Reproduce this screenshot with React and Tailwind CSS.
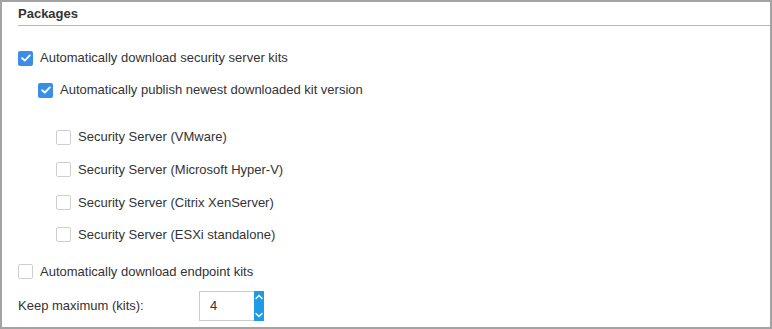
import { useState } from 'react';

function Check({ checked, onChange, label }) {
  return (
    <label className="flex items-center h-5 cursor-pointer select-none">
      <span
        onClick={() => onChange(!checked)}
        className={`w-[15px] h-[15px] rounded-[2px] flex items-center justify-center shrink-0 ${
          checked ? 'bg-[#3a8ee6]' : 'bg-white border border-[#cfcfcf]'
        }`}
      >
        {checked && (
          <svg width="10" height="8" viewBox="0 0 10 8" fill="none">
            <path d="M1.2 4.2 L3.8 6.6 L8.8 1.4" stroke="white" strokeWidth="1.9" strokeLinecap="round" strokeLinejoin="round" />
          </svg>
        )}
      </span>
      <span className="ml-[7px] text-[13px] text-[#333]">{label}</span>
    </label>
  );
}

const servers = [
  'Security Server (VMware)',
  'Security Server (Microsoft Hyper-V)',
  'Security Server (Citrix XenServer)',
  'Security Server (ESXi standalone)',
];

export default function App() {
  const [dlServer, setDlServer] = useState(true);
  const [publish, setPublish] = useState(true);
  const [srv, setSrv] = useState([false, false, false, false]);
  const [dlEndpoint, setDlEndpoint] = useState(false);
  const [keep, setKeep] = useState(4);

  return (
    <div
      className="w-[772px] h-[329px] bg-white border-2 border-[#a3a3a3] overflow-hidden"
      style={{ fontFamily: '"Liberation Sans", Arial, sans-serif' }}
    >
      <div className="ml-4 h-[24px] border-b border-[#b8b8b8] flex items-center">
        <span className="text-[13px] font-bold text-[#333]">Packages</span>
      </div>

      <div className="pl-4 pt-[22px] flex flex-col">
        <Check checked={dlServer} onChange={setDlServer} label="Automatically download security server kits" />
        <div className="pl-5 mt-3">
          <Check checked={publish} onChange={setPublish} label="Automatically publish newest downloaded kit version" />
        </div>

        <div className="pl-[38px] mt-[27px] flex flex-col gap-[12.67px]">
          {servers.map((s, i) => (
            <Check
              key={s}
              checked={srv[i]}
              onChange={(v) => setSrv(srv.map((x, j) => (j === i ? v : x)))}
              label={s}
            />
          ))}
        </div>

        <div className="mt-[17px]">
          <Check checked={dlEndpoint} onChange={setDlEndpoint} label="Automatically download endpoint kits" />
        </div>

        <div className="mt-[9px] flex items-center h-[30px]">
          <span className="w-[181px] text-[13px] text-[#333]">Keep maximum (kits):</span>
          <div className="flex h-[30px]">
            <input
              value={keep}
              onChange={(e) => setKeep(e.target.value.replace(/[^0-9]/g, ''))}
              className="w-[55px] h-[30px] border border-[#cccccc] border-r-0 px-[10px] text-[13px] text-[#333] outline-none"
            />
            <div className="w-[10px] h-[30px] bg-[#1e9be5] flex flex-col items-center justify-between py-[3px]">
              <svg width="8" height="6" viewBox="0 0 8 6" fill="none">
                <path d="M1 4.5 L4 1.5 L7 4.5" stroke="white" strokeWidth="1.4" strokeLinecap="round" />
              </svg>
              <svg width="8" height="6" viewBox="0 0 8 6" fill="none">
                <path d="M1 1.5 L4 4.5 L7 1.5" stroke="white" strokeWidth="1.4" strokeLinecap="round" />
              </svg>
            </div>
          </div>
        </div>
      </div>
    </div>
  );
}
